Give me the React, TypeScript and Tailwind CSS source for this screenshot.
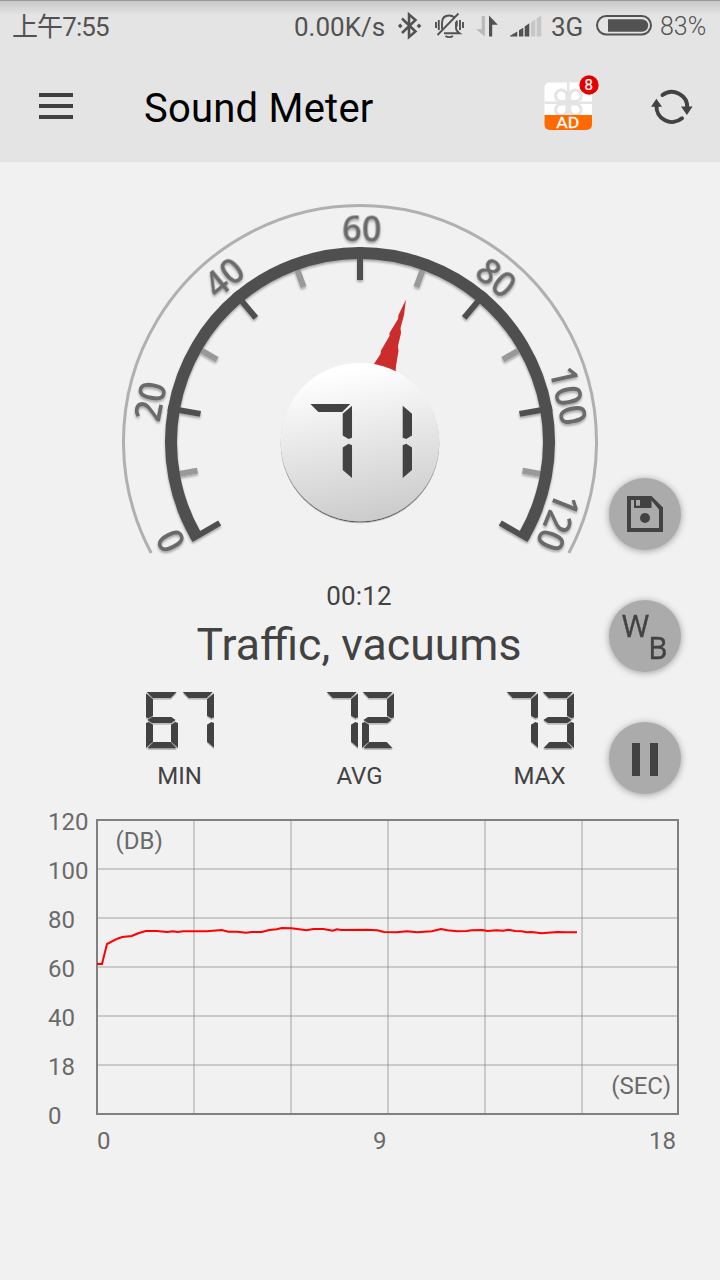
import type { ReactNode } from "react";

type Point = [number, number];

const stats = [
  { label: "MIN", value: "67" },
  { label: "AVG", value: "72" },
  { label: "MAX", value: "73" },
];

const yLabels = ["120", "100", "80", "60", "40", "18", "0"];

// x / y offsets inside the plot area
const samples: Point[] = [
  [0, 144], [5, 144], [10, 124], [20.3, 118.7], [25.3, 117], [34.7, 116], [41.3, 113.3], [48.7, 111],
  [59.7, 111], [70.3, 112], [75.7, 111.3], [80.7, 112], [86.3, 111.3], [109.7, 111.3], [124.7, 110],
  [131.3, 111.7], [140.3, 111.7], [149, 112.7], [154.7, 112], [164.7, 112], [172.3, 110], [179.7, 109.3],
  [184.7, 108], [194.7, 108.3], [209.7, 110.3], [216.3, 109], [226.3, 109], [235.7, 110.7], [239.7, 109.3],
  [244.7, 110], [269.7, 109.7], [280.3, 110.3], [287, 112], [299.7, 112.3], [309.7, 111.3], [320.3, 112.3],
  [334.7, 111.3], [344, 109], [350.3, 110.3], [360.3, 111.3], [369.7, 111], [374.7, 110.3], [385.7, 110],
  [390.3, 111], [399.7, 110.3], [406.3, 110.7], [411.3, 109.7], [418, 111], [424.7, 111.3], [429.7, 112.3],
  [434.7, 112], [444.7, 113.3], [460.3, 112], [469.7, 112.3], [480, 112.3],
];

// bars of a seven segment display on a 96x169 grid
const segments: Record<string, string> = {
  a: "2,0 92,0 74,18 20,18",
  b: "96,4 75,22 75,71 88,79 96,76",
  c: "96,93 88,90 75,98 75,149 96,167",
  d: "22,150 74,150 92,169 4,169",
  e: "0,93 8,90 21,98 21,149 0,167",
  f: "0,4 21,22 21,71 8,79 0,76",
  g: "4,84 18,75 76,75 89,84 76,93 18,93",
};

const lit: Record<string, string> = {
  "1": "ef",
  "2": "abged",
  "3": "abgcd",
  "6": "afgedc",
  "7": "abc",
};

function Digit({ value }: { value: string }) {
  return (
    <>
      {lit[value].split("").map((s) => (
        <polygon key={s} points={segments[s]} fill="#424242" />
      ))}
    </>
  );
}

function Readout({ value }: { value: string }) {
  return (
    <svg role="img" aria-label={value} width="68" height="60" viewBox="0 0 204 180">
      {value.split("").map((v, i) => (
        <g key={i} transform={`translate(${i * 108} 0)`}>
          <g transform="translate(0 5)" opacity="0.3">
            <Digit value={v} />
          </g>
          <Digit value={v} />
        </g>
      ))}
    </svg>
  );
}

function StatusBar() {
  return (
    <div className="flex h-[54px] items-center bg-linear-to-b from-[#c9c9c9] to-[#e4e4e4] to-[14px] border-t border-[#9a9a9a] text-[26px] text-[#525252]">
      <div className="w-[294px] pl-3 tracking-[-0.9px] whitespace-nowrap">上午7:55</div>
      <div className="w-[104px] whitespace-nowrap">0.00K/s</div>
      <svg className="shrink-0" width="36" height="54" viewBox="0 0 36 54">
        <path d="M4 17.5 17.5 30.5 11 36V13.5L17.5 19 4 32" fill="none" stroke="#525252" strokeWidth="2.5" />
        <path d="M2.2 22.5 4.6 24.9 2.2 27.3-.2 24.9zM21 22.5l2.4 2.4L21 27.3l-2.4-2.4z" fill="#525252" />
      </svg>
      <svg className="shrink-0" width="42" height="54" viewBox="0 0 42 54" fill="none" stroke="#525252" strokeWidth="1.9">
        <path d="M2 21v6M4.8 19v10M22.8 19.5v6M26 19v10M29 21v6" />
        <path d="M8 28v-6c0-5 3-7.5 7.2-7.5 2.4 0 4 .8 5.3 2M22 21v6c0 2 1 3.500 3.500 5.200H10" />
        <path d="M24.5 12.5 3.5 34M11.5 35c2 1.500 5.500 1.500 7.500 0" />
      </svg>
      <svg className="shrink-0" width="34" height="54" viewBox="0 0 34 54">
        <path d="M5.7 15h3.2v20.5L0 28.2h5.7z" fill="#b9b9b9" />
        <path d="M13 35.5V14.5l8.8 9.2H16.2V35.5z" fill="#525252" />
      </svg>
      <svg className="shrink-0" width="41" height="54" viewBox="0 0 41 54">
        <path d="M0 35.5v-.7l7.3-4.3v5zM9 35.5v-6.3l4.3-2.5V35.5zM14.7 35.5V25.5l4.6-3.3V35.5z" fill="#525252" />
        <path d="M21 35.5V21.5l4.3-3.3V35.5zM26.7 35.5V17.5l4.6-3.2V35.5z" fill="#c6c6c6" />
      </svg>
      <div className="w-[45px]">3G</div>
      <svg className="shrink-0" width="64" height="54" viewBox="0 0 64 54">
        <rect x="1" y="15" width="54" height="18.5" rx="9.2" fill="none" stroke="#525252" strokeWidth="2" />
        <path d="M12 18.3h34a6.2 6.2 0 0 1 0 12.4H12z" fill="#525252" />
      </svg>
      <div className="pb-[2px] text-[25px] font-[350]">83%</div>
    </div>
  );
}

function AdIcon() {
  return (
    <svg width="58" height="58" viewBox="0 0 58 58">
      <clipPath id="box">
        <rect x="1.5" y="8.5" width="47.5" height="47.5" rx="5" />
      </clipPath>
      <g clipPath="url(#box)">
        <rect y="8" width="50" height="50" fill="#fff" />
        <path d="M25.3 8v34M0 28.7h50" stroke="#e4e4e4" strokeWidth="2.6" />
        <g fill="#fff" stroke="#e4e4e4" strokeWidth="3">
          <path d="M24 27.5v-5.5a5.7 5.7 0 1 0-5.7 5.5zM26.8 27.5v-5.5a5.7 5.7 0 1 1 5.7 5.5z" />
          <path d="M24 30v5.5a5.7 5.7 0 1 1-5.7-5.5zM26.8 30v5.5a5.7 5.7 0 1 0 5.7-5.5z" />
        </g>
        <rect y="41" width="50" height="16" fill="#ff6a00" />
      </g>
      <text x="13.2" y="54.200" fontSize="15.5" textLength="23" lengthAdjust="spacingAndGlyphs" fill="#fff" stroke="#fff" strokeWidth="0.3">AD</text>
      <circle cx="46" cy="11" r="9.7" fill="#e40000" />
      <text x="45.8" y="16.200" fontSize="15" textAnchor="middle" fill="#fff" stroke="#fff" strokeWidth="0.2">8</text>
    </svg>
  );
}

function Toolbar() {
  return (
    <header className="flex h-[108px] items-center bg-[#e4e4e4] pl-[39px] pr-[26px]">
      <button className="mb-1 flex w-[34px] flex-col gap-[7px]">
        <span className="h-1 bg-[#404040]" />
        <span className="h-1 bg-[#404040]" />
        <span className="h-1 bg-[#404040]" />
      </button>
      <h1 className="mt-[2px] ml-[71px] flex-1 text-[40px] tracking-[0.22px] whitespace-nowrap text-black">Sound Meter</h1>
      <div className="mb-[10px]">
        <AdIcon />
      </div>
      <svg className="mb-[2px] ml-[50px]" width="43" height="44" viewBox="0 0 43 44" fill="none" stroke="#424242" strokeWidth="4">
        <path d="M11.5 10A15.5 15.5 0 0 1 36.3 23M31 33.3A15.5 15.5 0 0 1 5.5 20.500" strokeLinecap="round" />
        <path d="M30 21.5h11.6l-5.7 8.4zM0 21.8h11L5.4 13.8z" fill="#424242" stroke="none" />
      </svg>
    </header>
  );
}

const CX = 360;
const CY = 280;

function polar(deg: number, r: number): Point {
  const a = (deg * Math.PI) / 180;
  return [CX + r * Math.sin(a), CY - r * Math.cos(a)];
}

function arc(r: number, from: number, to: number) {
  return `M${polar(from, r).join(" ")}A${r} ${r} 0 1 1 ${polar(to, r).join(" ")}`;
}

const dialLabels = [
  { text: "0", deg: -117.6 },
  { text: "20", deg: -79 },
  { text: "40", deg: -39.5 },
  { text: "60", deg: 0.5 },
  { text: "80", deg: 39.7 },
  { text: "100", deg: 77.5 },
  { text: "120", deg: 112 },
];

function Gauge() {
  const ticks = Array.from({ length: 13 }, (_, i) => -120 + i * 20);
  return (
    <svg className="block" width="720" height="413" viewBox="0 0 720 413">
      <defs>
        <linearGradient id="knob" x1="0.4" y1="0" x2="0.6" y2="1">
          <stop offset="0.05" stopColor="#ffffff" />
          <stop offset="0.5" stopColor="#e6e6e6" />
          <stop offset="1" stopColor="#cbcbcb" />
        </linearGradient>
        <filter id="soft" x="-10%" y="-10%" width="120%" height="120%">
          <feDropShadow dx="0" dy="2" stdDeviation="1" floodOpacity="0.3" />
        </filter>
        <filter id="edge" x="-10%" y="-10%" width="120%" height="120%">
          <feDropShadow dx="0" dy="1.3" stdDeviation="0.7" floodOpacity="0.7" />
        </filter>
      </defs>
      <path d={arc(236.5, -118, 118)} fill="none" stroke="#b0b0b0" strokeWidth="3" />
      <g filter="url(#soft)" fill="none">
        {ticks.map((deg, i) => {
          const major = i % 2 === 0;
          const [x1, y1] = polar(deg, major ? 195 : 185);
          const [x2, y2] = polar(deg, major ? 162 : 165);
          return <line key={deg} x1={x1} y1={y1} x2={x2} y2={y2} stroke={major ? "#505050" : "#999999"} strokeWidth="6" />;
        })}
        <path d={arc(189, -120, 120)} stroke="#505050" strokeWidth="12" />
      </g>
      <g filter="url(#soft)" fill="#6a6a6a" fontFamily="'Open Sans', sans-serif" fontSize="37" fontWeight="600" textAnchor="middle">
        {dialLabels.map(({ text, deg }) => {
          const [x, y] = polar(deg, 213.5);
          return (
            <text key={text} transform={`translate(${x} ${y}) rotate(${deg}) scale(.93 1)`} y="13">
              {text}
            </text>
          );
        })}
      </g>
      <path d="M406 137.5 398.5 153 398 157 389.5 171 389.5 174 381 188.5 380.5 192 373 203.5 395.5 212 396 204 398.5 189 398 184 401 171 400.5 166 404 153z" fill="#cd2c2c" />
      <circle cx="360" cy="280" r="79.3" fill="url(#knob)" filter="url(#edge)" />
      <g role="img" aria-label="71">
        <g transform="translate(309.5 242) scale(.443)">
          <Digit value="7" />
        </g>
        <g transform="translate(402.7 242) scale(.443)">
          <Digit value="1" />
        </g>
      </g>
    </svg>
  );
}

function RoundButton({ label, children }: { label: string; children: ReactNode }) {
  return (
    <button aria-label={label} className="size-[72px] rounded-full bg-[#ababab] shadow-[0_1px_7px_rgba(0,0,0,0.35)]">
      <svg width="72" height="72" viewBox="0 0 72 72" fill="#424242">
        {children}
      </svg>
    </button>
  );
}

function Chart() {
  return (
    <div className="mt-1 flex pl-12">
      <div className="flex w-12 flex-col">
        {yLabels.map((l) => (
          <span key={l} className="h-[49px] text-[24px] leading-[49px]">{l}</span>
        ))}
      </div>
      <div className="mt-5">
        <svg className="block" width="584" height="298" viewBox="-1 -2 584 298" fill="none" strokeWidth="2">
          <path d="M0 0H581V294H0z" stroke="#808080" />
          <g stroke="#808080" strokeOpacity="0.35">
            {[97, 194, 291, 388, 485].map((x) => (
              <path key={x} d={`M${x} 0V294`} />
            ))}
            {[49, 98, 147, 196, 245].map((y) => (
              <path key={y} d={`M0 ${y}H581`} />
            ))}
          </g>
          <polyline points={samples.map((p) => p.join(",")).join(" ")} stroke="#ff0000" />
          <g fontSize="24" fill="#6a6a6a" stroke="none">
            <text x="18.5" y="29">(DB)</text>
            <text x="574" y="274" textAnchor="end">(SEC)</text>
          </g>
        </svg>
        <div className="mt-[7px] ml-px flex w-[579px] justify-between text-[24px] leading-9">
          <span>0</span>
          <span>9</span>
          <span>18</span>
        </div>
      </div>
    </div>
  );
}

export default function App() {
  return (
    <div className="h-[1280px] w-[720px] overflow-hidden bg-[#f1f1f1] font-[Roboto,'Noto_Sans_CJK_SC',sans-serif]">
      <StatusBar />
      <Toolbar />
      <main className="relative text-[#6a6a6a]">
        <Gauge />
        <div className="text-center text-[#424242]">
          <p className="-ml-[2px] text-[26px] leading-[42px] tracking-[0.2px]">00:12</p>
          <p className="-ml-[2px] text-[44.6px] leading-[56px]">Traffic, vacuums</p>
        </div>
        <div className="mx-[90px] mt-[19px] grid grid-cols-3 text-[#424242]">
          {stats.map((s) => (
            <div key={s.label} className="flex flex-col items-center">
              <Readout value={s.value} />
              <span className="mt-[6px] -ml-px text-[24px] leading-9">{s.label}</span>
            </div>
          ))}
        </div>
        <Chart />
        <div className="absolute top-[316px] right-[39px] flex flex-col gap-[50px]">
          <RoundButton label="Save">
            <path fillRule="evenodd" d="M18 18h24.5L54 29.5V54H18zM22 22v28h28V31.5L42.5 22.5V30H25v-8z" />
            <path d="M27 22h4v5.7h-4z" fill="#ababab" />
            <circle cx="36" cy="40" r="5" />
          </RoundButton>
          <RoundButton label="Weighting">
            <g fontFamily="'Open Sans', sans-serif" fontSize="31" stroke="#424242" strokeWidth="0.5">
              <text x="13" y="36.8" textLength="27" lengthAdjust="spacingAndGlyphs">W</text>
              <text x="39.2" y="58.8" textLength="19" lengthAdjust="spacingAndGlyphs">B</text>
            </g>
          </RoundButton>
          <RoundButton label="Pause">
            <path d="M23 21h8v33h-8zM41 21h8v33h-8z" />
          </RoundButton>
        </div>
      </main>
    </div>
  );
}
